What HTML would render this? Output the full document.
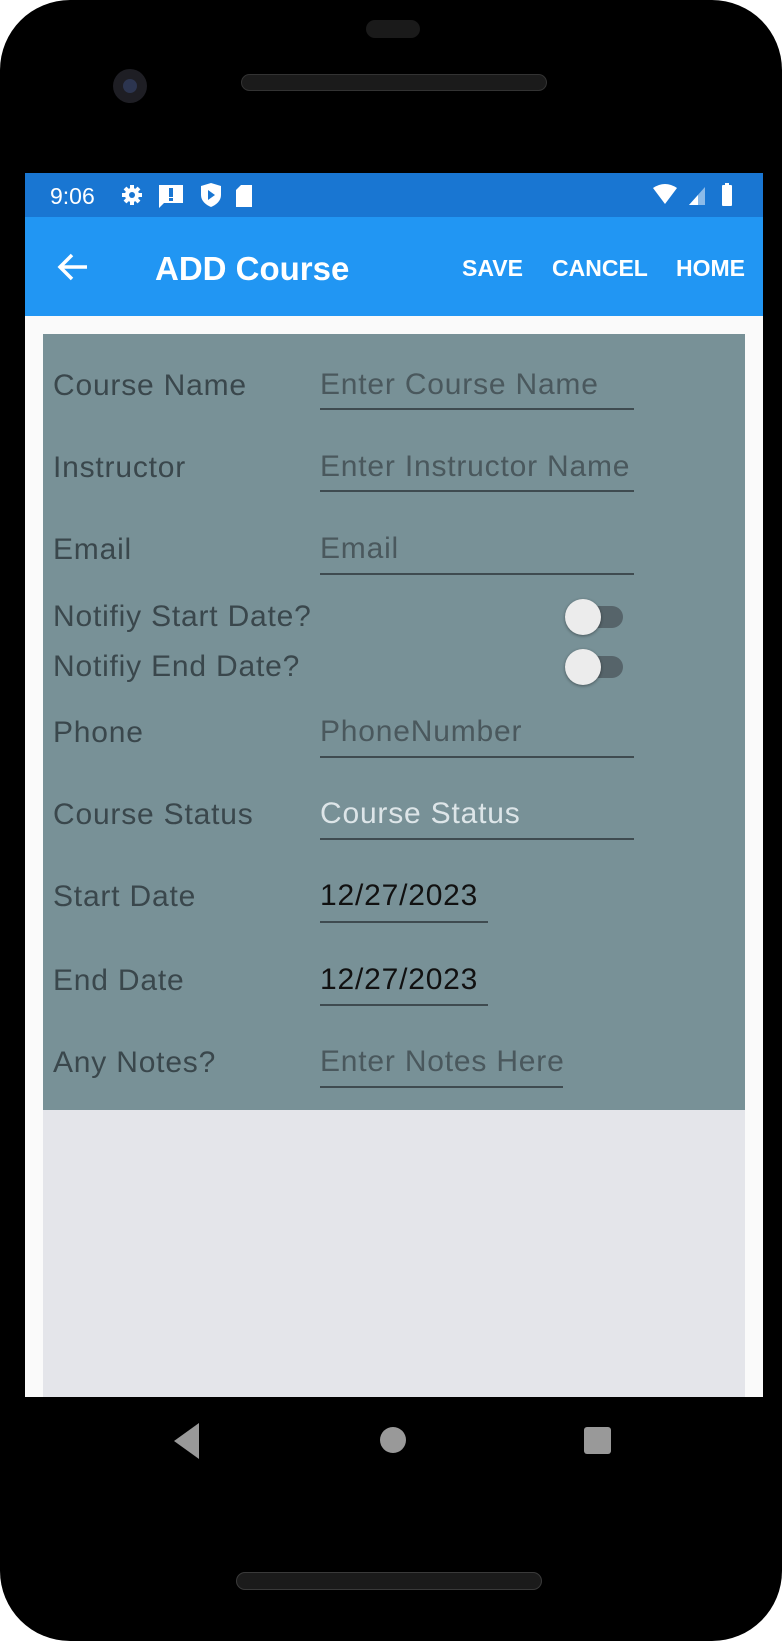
<!DOCTYPE html>
<html><head><meta charset="utf-8"><style>
*{margin:0;padding:0;box-sizing:border-box}
body{width:782px;height:1641px;background:#fff;position:relative;overflow:hidden;font-family:"Liberation Sans",sans-serif}
.phone{position:absolute;left:0;top:0;width:782px;height:1641px;background:#000;border-radius:70px}
.a{position:absolute}
.lbl{position:absolute;left:53px;font-size:30px;letter-spacing:.8px;color:#3a474c;line-height:40px;height:40px;white-space:nowrap}
.ph{position:absolute;left:320px;font-size:30px;letter-spacing:.8px;color:#4a585d;line-height:40px;height:40px;white-space:nowrap}
.ul{position:absolute;left:320px;height:2px;background:#3f4b50}
.sw{position:absolute;left:565px;width:58px;height:22px;border-radius:11px;background:#56646a}
.sw:after{content:"";position:absolute;left:0;top:-7px;width:36px;height:36px;border-radius:50%;background:#ececec;box-shadow:0 1px 3px rgba(0,0,0,.4)}
.act{position:absolute;top:253px;font-size:23px;font-weight:bold;color:#fff;line-height:30px}
</style></head><body>
<div class="phone"></div>
<div class="a" style="left:366px;top:20px;width:54px;height:18px;border-radius:9px;background:#1a1a1a"></div>
<div class="a" style="left:241px;top:74px;width:306px;height:17px;border-radius:9px;background:#1b1b1b;border:1px solid #333"></div>
<div class="a" style="left:113px;top:69px;width:34px;height:34px;border-radius:50%;background:#1e1e24"></div>
<div class="a" style="left:123px;top:79px;width:14px;height:14px;border-radius:50%;background:#2c3550"></div>
<div class="a" style="left:25px;top:173px;width:738px;height:1224px;background:#fafafa"></div>
<div class="a" style="left:25px;top:173px;width:738px;height:44px;background:#1976d2"></div>
<div class="a" style="left:50px;top:181px;font-size:23px;color:#fff;line-height:30px">9:06</div>
<svg class="a" style="left:120px;top:183px" width="150" height="26" viewBox="0 0 150 26">
<g fill="#fff">
<circle cx="12" cy="12" r="7"/><g stroke="#fff" stroke-width="4"><line x1="12" y1="2" x2="12" y2="22"/><line x1="2" y1="12" x2="22" y2="12"/><line x1="5" y1="5" x2="19" y2="19"/><line x1="19" y1="5" x2="5" y2="19"/></g><circle cx="12" cy="12" r="3" fill="#1976d2"/>
<path d="M39 2h24v18H44l-5 5z"/><rect x="49" y="5" width="4" height="9" fill="#1976d2"/><rect x="49" y="15" width="4" height="3" fill="#1976d2"/>
<path d="M81 3l10-3 10 3v9c0 6-5 10-10 12-5-2-10-6-10-12z"/><path d="M88 7l7 5-7 5z" fill="#1976d2"/>
<path d="M121 2h11v22h-16V7z"/>
</g></svg>
<svg class="a" style="left:652px;top:183px" width="80" height="24" viewBox="0 0 80 24">
<path d="M1 5q12-8 24 0l-12 16z" fill="#fff"/>
<path d="M37 22l16-18v18z" fill="#fff" opacity=".5"/><path d="M37 22l9-10v10z" fill="#fff"/>
<rect x="70" y="2" width="10" height="21" rx="1" fill="#fff"/><rect x="73" y="0" width="4" height="3" fill="#fff"/>
</svg>
<div class="a" style="left:25px;top:217px;width:738px;height:99px;background:#2196f3"></div>
<svg class="a" style="left:56px;top:251px" width="34" height="32" viewBox="0 0 34 32"><path d="M31 16H5M16 4L4 16l12 12" stroke="#fff" stroke-width="3.5" fill="none"/></svg>
<div class="a" style="left:155px;top:249px;font-size:33px;font-weight:bold;color:#fff;line-height:40px">ADD Course</div>
<div class="act" style="left:462px">SAVE</div>
<div class="act" style="left:552px">CANCEL</div>
<div class="act" style="left:676px">HOME</div>
<div class="a" style="left:43px;top:334px;width:702px;height:1063px;background:#e4e5ea"></div>
<div class="a" style="left:43px;top:334px;width:702px;height:776px;background:#789197"></div>

<div class="lbl" style="top:366px">Course Name</div><div class="ph" style="top:365px">Enter Course Name</div><div class="ul" style="top:408px;width:314px"></div>
<div class="lbl" style="top:448px">Instructor</div><div class="ph" style="top:447px">Enter Instructor Name</div><div class="ul" style="top:490px;width:314px"></div>
<div class="lbl" style="top:530px">Email</div><div class="ph" style="top:529px">Email</div><div class="ul" style="top:573px;width:314px"></div>
<div class="lbl" style="top:597px">Notifiy Start Date?</div><div class="sw" style="top:606px"></div>
<div class="lbl" style="top:647px">Notifiy End Date?</div><div class="sw" style="top:656px"></div>
<div class="lbl" style="top:713px">Phone</div><div class="ph" style="top:712px">PhoneNumber</div><div class="ul" style="top:756px;width:314px"></div>
<div class="lbl" style="top:795px">Course Status</div><div class="ph" style="top:794px;color:#dde5e8">Course Status</div><div class="ul" style="top:838px;width:314px"></div>
<div class="lbl" style="top:877px">Start Date</div><div class="ph" style="top:876px;color:#111">12/27/2023</div><div class="ul" style="top:921px;width:168px"></div>
<div class="lbl" style="top:961px">End Date</div><div class="ph" style="top:960px;color:#111">12/27/2023</div><div class="ul" style="top:1004px;width:168px"></div>
<div class="lbl" style="top:1043px">Any Notes?</div><div class="ph" style="top:1042px">Enter Notes Here</div><div class="ul" style="top:1086px;width:243px"></div>

<svg class="a" style="left:172px;top:1422px" width="30" height="38" viewBox="0 0 30 38"><path d="M27 1v36L2 19z" fill="#999"/></svg>
<div class="a" style="left:380px;top:1427px;width:26px;height:26px;border-radius:50%;background:#999"></div>
<div class="a" style="left:584px;top:1427px;width:27px;height:27px;border-radius:3px;background:#999"></div>
<div class="a" style="left:236px;top:1572px;width:306px;height:18px;border-radius:9px;background:#1b1b1b;border:1px solid #3a3a3a"></div>
</body></html>
